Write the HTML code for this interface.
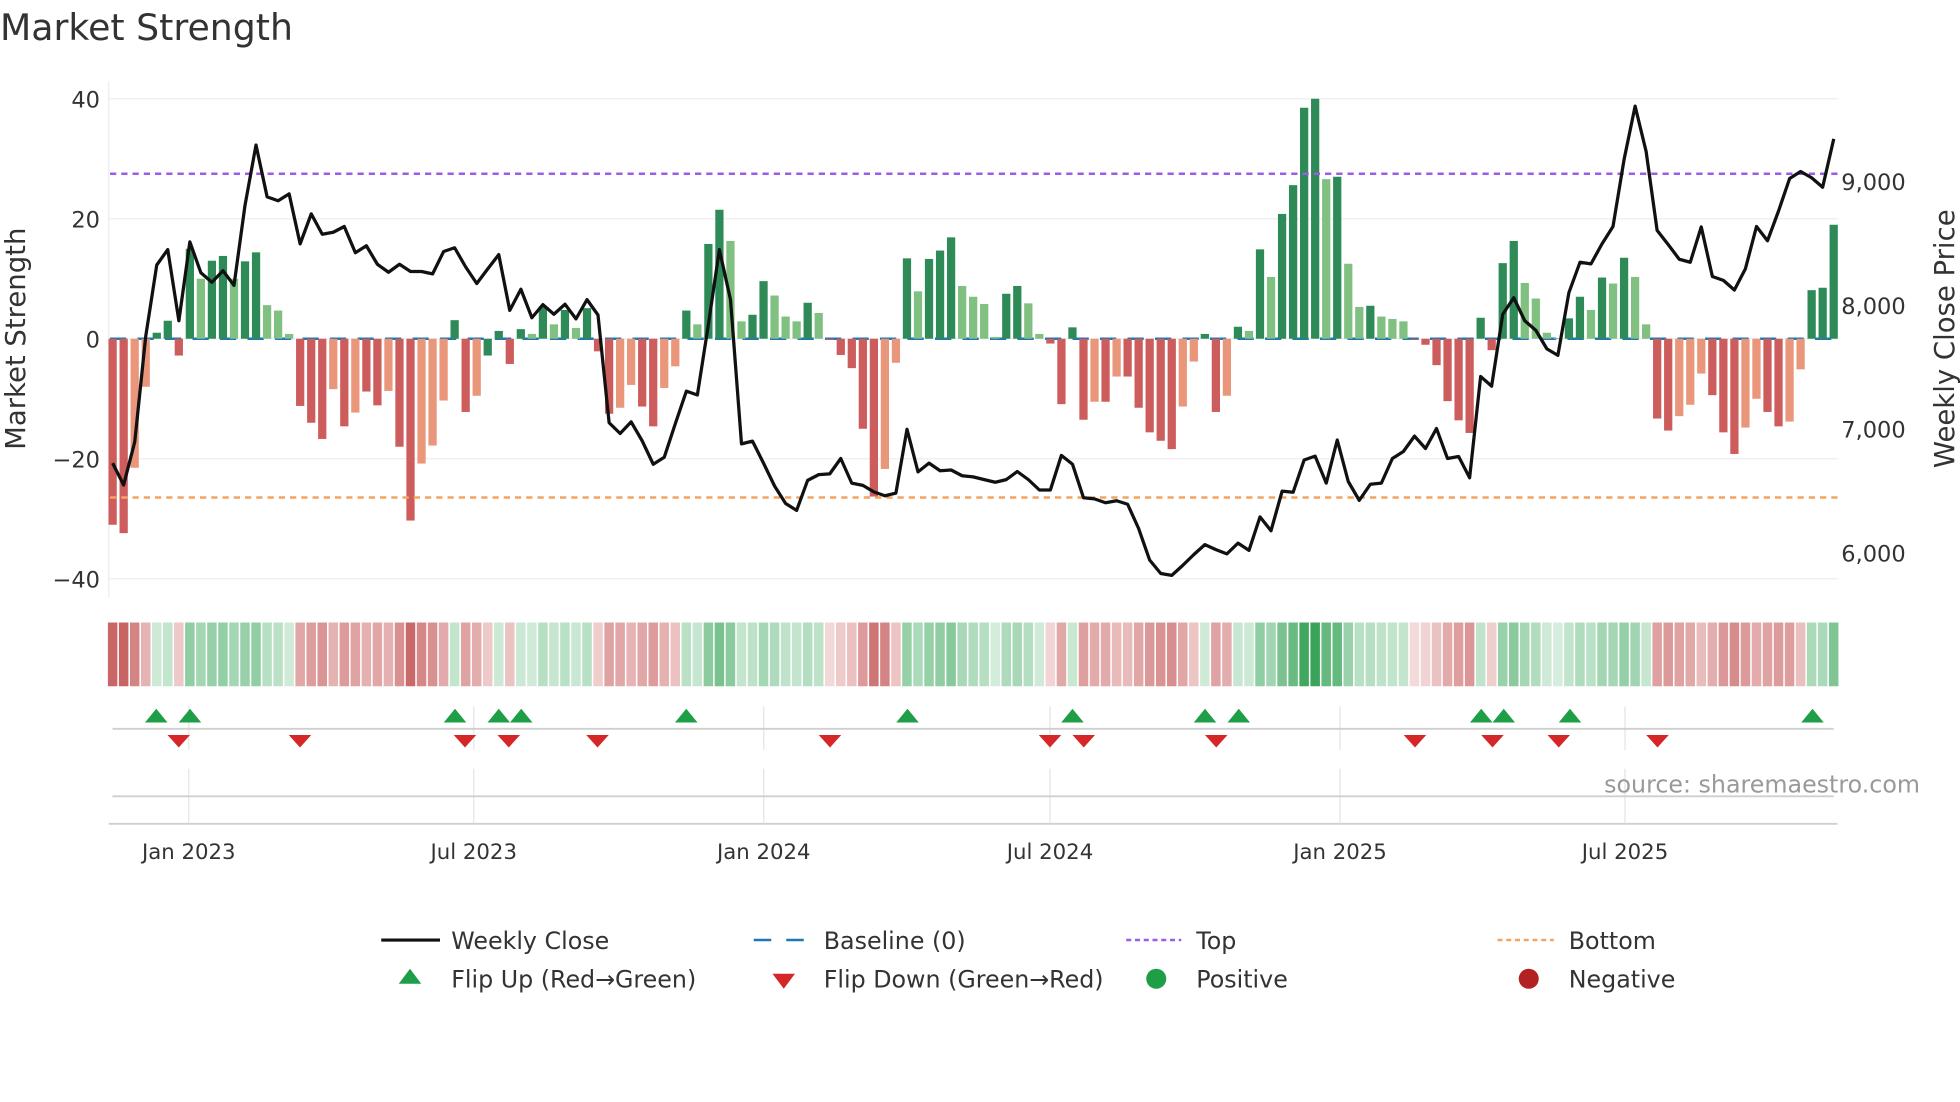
<!DOCTYPE html>
<html><head><meta charset="utf-8"><style>
html,body{margin:0;padding:0;background:#fff;}
svg{display:block;font-family:"DejaVu Sans","Liberation Sans",sans-serif;}
</style></head><body>
<svg id="c" width="1960" height="1102" viewBox="0 0 1568 881.6" xmlns="http://www.w3.org/2000/svg">
<rect width="1568" height="882" fill="#fff"/>
<text x="0" y="32" font-size="29" fill="#333">Market Strength</text>
<g stroke="#eceef2" stroke-width="1">
<line x1="87" y1="79" x2="1470" y2="79"/><line x1="87" y1="175" x2="1470" y2="175"/>
<line x1="87" y1="271" x2="1470" y2="271"/><line x1="87" y1="367" x2="1470" y2="367"/>
<line x1="87" y1="463" x2="1470" y2="463"/><line x1="87" y1="65" x2="87" y2="478"/>
</g>
<g font-size="18" fill="#333" text-anchor="end">
<text x="80" y="86">40</text><text x="80" y="182">20</text><text x="80" y="278">0</text>
<text x="80" y="374">−20</text><text x="80" y="470">−40</text>
</g>
<g font-size="18" fill="#333">
<text x="1473" y="152">9,000</text><text x="1473" y="251">8,000</text>
<text x="1473" y="350">7,000</text><text x="1473" y="449">6,000</text>
</g>
<text transform="translate(20,271) rotate(-90)" font-size="22" fill="#333" text-anchor="middle">Market Strength</text>
<text transform="translate(1563,271) rotate(-90)" font-size="22" fill="#333" text-anchor="middle">Weekly Close Price</text>
<line x1="88" y1="271" x2="1470" y2="271" stroke="#1f77b4" stroke-width="2" stroke-dasharray="13 9"/>
<g id="bars"></g>
<line x1="88" y1="139" x2="1470" y2="139" stroke="#9b5de5" stroke-width="2" stroke-dasharray="5 4"/>
<line x1="88" y1="398" x2="1470" y2="398" stroke="#f4a460" stroke-width="2" stroke-dasharray="5 4"/>
<polyline id="price" fill="none" stroke="#111" stroke-width="2.6" stroke-linejoin="round"/>
<g id="strip"></g>
<g stroke="#e4e4e4" stroke-width="1">
<line x1="151" y1="565" x2="151" y2="600"/><line x1="379" y1="565" x2="379" y2="600"/><line x1="611" y1="565" x2="611" y2="600"/><line x1="840" y1="565" x2="840" y2="600"/><line x1="1072" y1="565" x2="1072" y2="600"/><line x1="1300" y1="565" x2="1300" y2="600"/>
<line x1="151" y1="615" x2="151" y2="658"/><line x1="379" y1="615" x2="379" y2="658"/><line x1="611" y1="615" x2="611" y2="658"/><line x1="840" y1="615" x2="840" y2="658"/><line x1="1072" y1="615" x2="1072" y2="658"/><line x1="1300" y1="615" x2="1300" y2="658"/>
</g>
<line x1="90" y1="583" x2="1467" y2="583" stroke="#cfcfcf" stroke-width="1.5"/>
<line x1="90" y1="637" x2="1467" y2="637" stroke="#cfcfcf" stroke-width="1.5"/>
<line x1="87" y1="659" x2="1470" y2="659" stroke="#cfcfcf" stroke-width="1.5"/>
<g id="marks"></g>
<text x="1536" y="634" font-size="19" fill="#999" text-anchor="end">source: sharemaestro.com</text>
<g font-size="17" fill="#333" text-anchor="middle">
<text x="151" y="687">Jan 2023</text><text x="379" y="687">Jul 2023</text><text x="611" y="687">Jan 2024</text>
<text x="840" y="687">Jul 2024</text><text x="1072" y="687">Jan 2025</text><text x="1300" y="687">Jul 2025</text>
</g>
<g font-size="19" fill="#333">
<line x1="305" y1="752" x2="352" y2="752" stroke="#111" stroke-width="2.5"/>
<text x="361" y="759">Weekly Close</text>
<line x1="603" y1="752" x2="645" y2="752" stroke="#1f77b4" stroke-width="2" stroke-dasharray="14 12"/>
<text x="659" y="759">Baseline (0)</text>
<line x1="901" y1="752" x2="945" y2="752" stroke="#9b5de5" stroke-width="2" stroke-dasharray="4 3"/>
<text x="957" y="759">Top</text>
<line x1="1198" y1="752" x2="1243" y2="752" stroke="#f4a460" stroke-width="2" stroke-dasharray="4 3"/>
<text x="1255" y="759">Bottom</text>
<polygon points="319,787 337,787 328,775" fill="#1e9e46"/>
<text x="361" y="790">Flip Up (Red→Green)</text>
<polygon points="618,779 636,779 627,791" fill="#d62728"/>
<text x="659" y="790">Flip Down (Green→Red)</text>
<circle cx="925" cy="783" r="8" fill="#1e9e46"/>
<text x="957" y="790">Positive</text>
<circle cx="1223" cy="783" r="8" fill="#b22222"/>
<text x="1255" y="790">Negative</text>
</g>
</svg>
<script>
var vals=[-31,-32.4,-21.5,-8,1,3,-2.8,15,10,13,13.8,10,12.9,14.4,5.6,4.7,0.8,-11.2,-14,-16.7,-8.4,-14.6,-12.3,-8.8,-11.1,-8.7,-18,-30.3,-20.8,-17.8,-10.3,3.1,-12.2,-9.5,-2.8,1.3,-4.2,1.6,0.8,5.4,2.4,4.8,1.8,5.1,-2.1,-12.5,-11.5,-7.7,-11.3,-14.6,-8.2,-4.6,4.7,2.4,15.8,21.5,16.3,2.9,4,9.6,7.2,3.7,2.9,6,4.3,-0.2,-2.7,-4.9,-15,-26.3,-21.7,-4,13.4,7.9,13.3,14.7,16.9,8.8,7,5.8,0.3,7.5,8.8,5.9,0.8,-0.8,-10.9,1.9,-13.5,-10.5,-10.5,-6.3,-6.3,-11.5,-15.6,-17,-18.4,-11.3,-3.8,0.8,-12.2,-9.5,2,1.3,14.9,10.3,20.8,25.6,38.5,40,26.6,27,12.5,5.3,5.5,3.7,3.3,2.9,-0.1,-1,-4.4,-10.4,-13.6,-15.7,3.5,-1.9,12.6,16.3,9.3,6.7,1,0.1,3.4,7,4.8,10.2,9.2,13.5,10.3,2.4,-13.3,-15.3,-12.9,-11,-5.8,-9.4,-15.6,-19.2,-14.8,-10,-12.2,-14.6,-13.8,-5.1,8.1,8.5,19];
var cols="RROODDRDLDDLDDLLLRRRORORRORROOODRODDRDLDLDLDRROORROODLDDLLDDLLLDLRRRRROODLDDDLLLLDDLLRRDRORORRRRROODRODLDLDDDDLDLLDLLLRRRRRRDRDDLLLLDDLDLDLLRROOORRROORROODDD";
var pz=[970,1027,915,640,455,415,600,395,475,500,470,508,300,143,278,288,270,400,322,375,370,355,423,405,453,474,453,472,472,478,420,410,460,503,465,428,573,518,592,558,583,557,595,545,585,865,893,863,912,973,955,868,783,793,610,415,545,920,913,970,1030,1075,1093,1015,1000,998,958,1022,1028,1045,1055,1048,882,993,970,990,988,1003,1006,1013,1020,1013,992,1013,1040,1040,950,973,1060,1063,1073,1068,1077,1140,1222,1257,1262,1236,1208,1182,1195,1206,1178,1197,1110,1146,1043,1046,962,952,1022,910,1018,1067,1025,1022,958,940,900,932,880,958,953,1008,745,770,583,540,600,625,673,690,527,448,452,400,355,180,42,160,365,402,440,448,356,485,495,520,465,355,392,315,230,212,228,253,127];
var C={D:"#2e8b57",L:"#80c080",R:"#cd5c5c",O:"#e9967a"};
var NS="http://www.w3.org/2000/svg";
function el(t,a,p){var e=document.createElementNS(NS,t);for(var k in a)e.setAttribute(k,a[k]);document.getElementById(p).appendChild(e);}
function X(i){return 90.1+8.826*i;}
function mix(a,b,t){var r=[];for(var i=0;i<3;i++)r.push(Math.round(a[i]+(b[i]-a[i])*t));return "rgb("+r.join(",")+")";}
var pts=[];
for(var i=0;i<vals.length;i++){
  var v=vals[i],x=X(i),y0=271,y1=271-v*4.8;
  el("rect",{x:x-3.3,y:Math.min(y0,y1),width:6.6,height:Math.max(0.8,Math.abs(y1-y0)),fill:C[cols[i]]||"#888"},"bars");
  var t=Math.min(1,Math.abs(v)/40);
  var f=v>=0?mix([214,238,222],[58,165,90],Math.pow(t,0.8)):mix([244,218,218],[200,100,100],Math.min(1,Math.pow(Math.abs(v)/32,0.8)));
  el("rect",{x:x-3.8,y:498,width:7.6,height:51,fill:f},"strip");
  pts.push(x.toFixed(1)+","+((90+pz[i]/2.6)/1.25).toFixed(1));
}
document.getElementById("price").setAttribute("points",pts.join(" "));
var up=[125,152,364,399,417,549,726,858,964,991,1185,1203,1256,1450];
var dn=[143,240,372,407,478,664,840,867,973,1132,1194,1247,1326];
up.forEach(function(x){el("polygon",{points:(x-9)+",578 "+(x+9)+",578 "+x+",567",fill:"#1e9e46"},"marks");});
dn.forEach(function(x){el("polygon",{points:(x-9)+",588 "+(x+9)+",588 "+x+",598",fill:"#d62728"},"marks");});
</script>
</body></html>
